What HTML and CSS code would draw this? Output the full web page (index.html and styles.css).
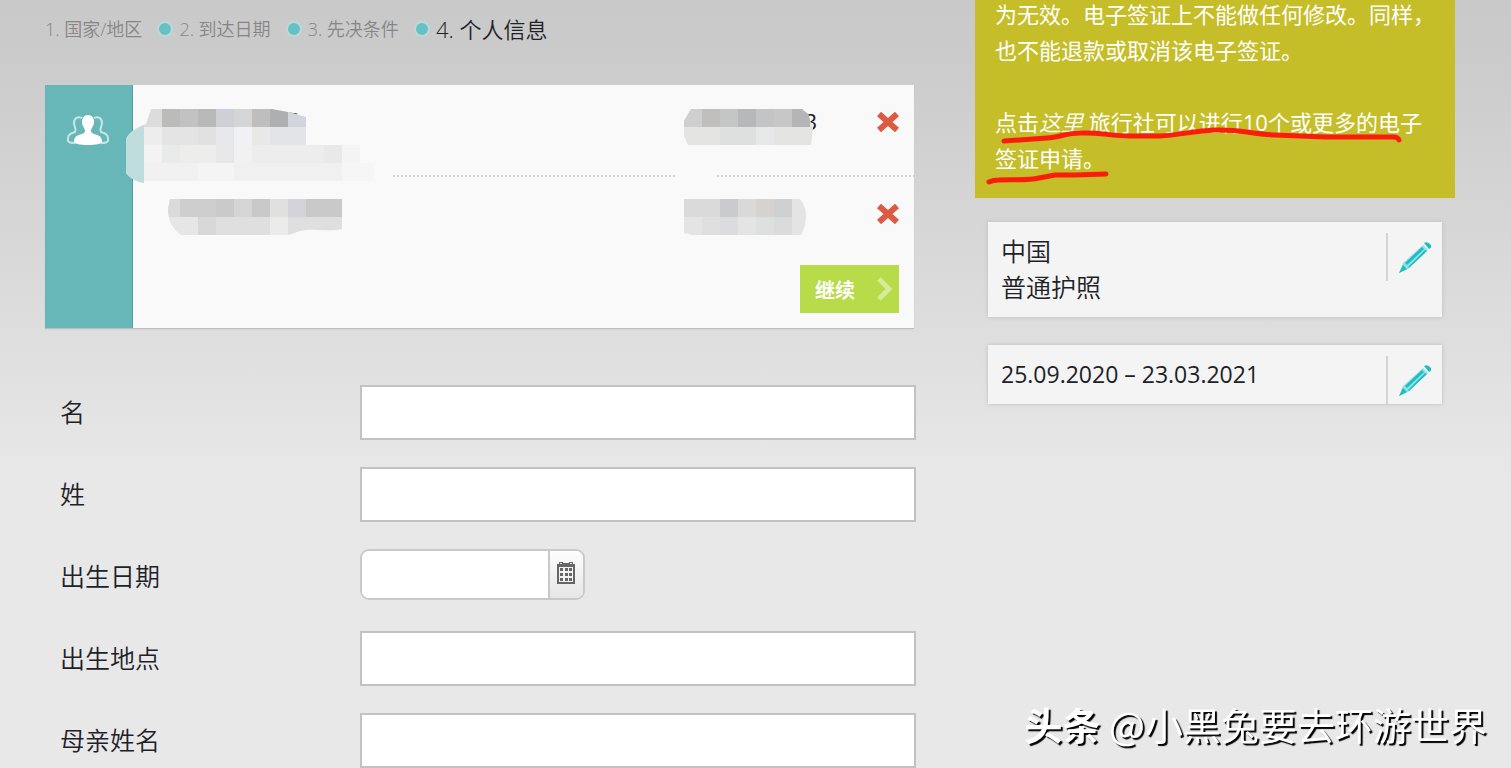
FILE: index.html
```html
<!DOCTYPE html>
<html lang="zh-CN">
<head>
  <meta charset="UTF-8">
  <title>电子签证申请</title>
  <link rel="stylesheet" href="styles.css">
</head>
<body>

  <div class="page">
    <main class="main">

      <!-- steps -->
      <ol class="steps">
        <li>1. 国家/地区</li>
        <li>2. 到达日期</li>
        <li>3. 先决条件</li>
        <li class="active">4. 个人信息</li>
      </ol>

      <!-- applicants -->
      <section class="people">
        <div class="people-side">
          <svg width="42" height="32" viewBox="0 0 42 32">
            <g fill="none" stroke="#c4e6e6" stroke-width="2">
              <path d="M15 4C11 2 7 4 7 9C7 13 10 15 8 18C4 19 1 21 1 24V27C2 29 5 29 8 29"/>
              <path d="M27 4C31 2 35 4 35 9C35 13 32 15 34 18C38 19 41 21 41 24V27C40 29 37 29 34 29"/>
            </g>
            <path fill="#fff" d="M21 1C17 1 15 4 15 8C15 12 18 14 18 17C18 19 15 20 12 21C8 22 7 25 7 28C7 30 14 31 21 31S35 30 35 28C35 25 34 22 30 21C27 20 24 19 24 17C24 14 27 12 27 8C27 4 25 1 21 1Z"/>
          </svg>
        </div>
        <div class="people-body">
          <ul>
            <li class="person">
              <div class="cell">
                <svg class="mosaic mosaic-name" width="270" height="92" viewBox="126 108 270 92">
                  <defs>
                    <clipPath id="blur1"><path d="M151 109H272L288 112L306 117V145H360V160L375 163L393 176V199H162V183H144C136 182 130 178 126 173V139C130 131 138 127 146 124Z"/></clipPath>
                  </defs>
                  <path d="M289 114L297 115" stroke="#1d2433" stroke-width="3"/>
                  <g clip-path="url(#blur1)">
                    <rect x="126" y="109" width="270" height="90" fill="#f9f9f9"/>
                    <path fill="#dcdcdc" d="M144 109h18v18h-18z"/>
                    <path fill="#bbbbb9" d="M162 109h18v18h-18z"/>
                    <path fill="#c2c2c2" d="M180 109h18v18h-18z"/>
                    <path fill="#b9b9b9" d="M198 109h18v18h-18z"/>
                    <path fill="#cdd0d7" d="M216 109h18v18h-18z"/>
                    <path fill="#d5d5d6" d="M234 109h18v18h-18z"/>
                    <path fill="#bfbebc" d="M252 109h18v18h-18z"/>
                    <path fill="#adafb1" d="M270 109h18v18h-18z"/>
                    <path fill="#d2d5db" d="M288 109h18v18h-18z"/>
                    <path fill="#bfdddd" d="M126 109h18v74h-18z"/>
                    <path fill="#ededed" d="M144 127h18v18h-18z"/>
                    <path fill="#e4e4e4" d="M162 127h36v18h-36z"/>
                    <path fill="#e1e1e0" d="M198 127h18v18h-18z"/>
                    <path fill="#e6e7ec" d="M216 127h18v18h-18z"/>
                    <path fill="#f0f1f4" d="M234 127h18v18h-18z"/>
                    <path fill="#e8e8e8" d="M252 127h18v18h-18z"/>
                    <path fill="#e2e4e8" d="M270 127h36v18h-36z"/>
                    <path fill="#f3f3f3" d="M144 145h18v18h-18z"/>
                    <path fill="#e9eaea" d="M162 145h18v18h-18z"/>
                    <path fill="#ededec" d="M180 145h36v18h-36z"/>
                    <path fill="#e6e7e6" d="M216 145h18v18h-18z"/>
                    <path fill="#f0f1f2" d="M234 145h18v18h-18z"/>
                    <path fill="#ededee" d="M252 145h72v18h-72z"/>
                    <path fill="#e9e9e9" d="M324 145h18v18h-18z"/>
                    <path fill="#f4f4f4" d="M342 145h18v18h-18z"/>
                    <path fill="#f1f1f1" d="M144 163h54v18h-54z"/>
                    <path fill="#f4f4f4" d="M198 163h36v18h-36z"/>
                    <path fill="#f0f0f0" d="M234 163h108v18h-108z"/>
                    <path fill="#f6f6f6" d="M342 163h32v18h-32z"/>
                  </g>
                </svg>
              </div>
              <div class="cell">
                <span class="number">3</span>
                <svg class="mosaic mosaic-number" width="130" height="36" viewBox="684 109 130 36">
                  <defs>
                    <clipPath id="blur2"><path d="M691 109H802L808 114L813 128L811 145H688L684 136V121Z"/></clipPath>
                  </defs>
                  <g clip-path="url(#blur2)">
                    <rect x="684" y="109" width="130" height="36" fill="#e4e4e3"/>
                    <path fill="#cfcfcf" d="M684 109h18v18h-18z"/>
                    <path fill="#c1bfbd" d="M702 109h18v18h-18z"/>
                    <path fill="#c4c5c5" d="M720 109h18v18h-18z"/>
                    <path fill="#b7b8ba" d="M738 109h18v18h-18z"/>
                    <path fill="#c3c4c5" d="M756 109h18v18h-18z"/>
                    <path fill="#c7c7c7" d="M774 109h18v18h-18z"/>
                    <path fill="#b3b5b6" d="M792 109h18v18h-18z"/>
                    <path fill="#dee0e0" d="M720 127h36v18h-36z"/>
                    <path fill="#e5e7e9" d="M756 127h18v18h-18z"/>
                  </g>
                </svg>
                <span class="gap"></span>
              </div>
              <button class="remove" type="button" aria-label="删除">
                <svg width="22" height="22" viewBox="0 0 22 22"><path d="M2 3L20 19M20 3L2 19" stroke="#db5a42" stroke-width="6"/></svg>
              </button>
            </li>
            <li class="person">
              <div class="cell">
                <svg class="mosaic mosaic-name2" width="174" height="36" viewBox="168 199 174 36">
                  <defs>
                    <clipPath id="blur3"><path d="M170 199H342V229C330 232 315 229 305 230C298 231 294 234 287 235H182C174 231 168 221 168 209Z"/></clipPath>
                  </defs>
                  <g clip-path="url(#blur3)">
                    <rect x="168" y="199" width="174" height="36" fill="#dfdfdf"/>
                    <path fill="#dadada" d="M168 199h12v18h-12z"/>
                    <path fill="#cecece" d="M180 199h36v18h-36z"/>
                    <path fill="#cacaca" d="M216 199h18v18h-18z"/>
                    <path fill="#d5d5d6" d="M234 199h18v18h-18z"/>
                    <path fill="#c9c9c9" d="M252 199h18v18h-18z"/>
                    <path fill="#e0e0de" d="M270 199h18v18h-18z"/>
                    <path fill="#d3d4d9" d="M288 199h18v18h-18z"/>
                    <path fill="#c8c9c9" d="M306 199h36v18h-36z"/>
                    <path fill="#e6e6e6" d="M168 217h30v18h-30z"/>
                    <path fill="#d8d8d8" d="M198 217h18v18h-18z"/>
                    <path fill="#ebebea" d="M270 217h18v18h-18z"/>
                  </g>
                </svg>
              </div>
              <div class="cell">
                <svg class="mosaic mosaic-number" width="122" height="36" viewBox="684 199 122 36">
                  <defs>
                    <clipPath id="blur4"><path d="M684 199H800C804 204 806 210 806 216S804 230 801 235H692L684 233Z"/></clipPath>
                  </defs>
                  <g clip-path="url(#blur4)">
                    <rect x="684" y="199" width="122" height="36" fill="#e4e4e4"/>
                    <path fill="#dadada" d="M684 199h36v18h-36z"/>
                    <path fill="#cacbcc" d="M720 199h18v18h-18z"/>
                    <path fill="#d9d9d9" d="M738 199h18v18h-18z"/>
                    <path fill="#d5d3cf" d="M756 199h18v18h-18z"/>
                    <path fill="#cfd0d1" d="M774 199h18v18h-18z"/>
                    <path fill="#dfdfdf" d="M702 217h18v18h-18z"/>
                    <path fill="#dbdcdd" d="M720 217h18v18h-18z"/>
                    <path fill="#dedfdf" d="M756 217h18v18h-18z"/>
                    <path fill="#dadcdc" d="M774 217h18v18h-18z"/>
                  </g>
                </svg>
              </div>
              <button class="remove" type="button" aria-label="删除">
                <svg width="22" height="22" viewBox="0 0 22 22"><path d="M2 3L20 19M20 3L2 19" stroke="#db5a42" stroke-width="6"/></svg>
              </button>
            </li>
          </ul>
          <button class="continue" type="button">
            继续
            <svg width="16" height="24" viewBox="0 0 16 24"><path d="M2 2L12 12L2 22" fill="none" stroke="#d6eb98" stroke-width="5"/></svg>
          </button>
        </div>
      </section>

      <!-- form -->
      <form class="form">
        <div class="row">
          <label for="first-name">名</label>
          <input id="first-name" type="text">
        </div>
        <div class="row">
          <label for="last-name">姓</label>
          <input id="last-name" type="text">
        </div>
        <div class="row">
          <label for="birth-date">出生日期</label>
          <div class="date">
            <input id="birth-date" type="text">
            <button type="button" aria-label="选择日期">
              <svg width="20" height="22" viewBox="0 0 20 22">
                <path fill="#666" d="M1 2H3V0H7V1H13V0H17V2H19V22H1Z"/>
                <path fill="#f2f2f2" d="M3 5H17V20H3ZM4 1H6V2H4ZM14 1H16V2H14Z"/>
                <path fill="#666" d="M4 6h3v3H4zM9 6h3v3H9zM13 6h3v3h-3zM4 11h3v3H4zM9 11h3v3H9zM13 11h3v3h-3zM4 16h3v3H4zM9 16h3v3H9zM13 16h3v3h-3z"/>
              </svg>
            </button>
          </div>
        </div>
        <div class="row">
          <label for="birth-place">出生地点</label>
          <input id="birth-place" type="text">
        </div>
        <div class="row">
          <label for="mother-name">母亲姓名</label>
          <input id="mother-name" type="text">
        </div>
      </form>
    </main>

    <aside class="side">
      <div class="notice">
        <p>为无效。电子签证上不能做任何修改。同样，<br>也不能退款或取消该电子签证。</p>
        <p>点击<a href="#"><em>这里</em></a> 旅行社可以进行10个或更多的电子<br>签证申请。</p>
        <svg class="marker" width="480" height="202" viewBox="0 -1 480 202">
          <g fill="none" stroke="#fb1d0c" stroke-width="5" stroke-linecap="round" stroke-linejoin="round">
            <path d="M29 144L72 141C85 140 92 136 105 136C125 135 135 139 155 139H185C205 138 218 134 240 133C265 132 275 137 300 138L350 140H418Q423 140 424 143"/>
            <path d="M14 185Q18 183 24 183C38 182 52 184 64 181L80 178H100L131 177"/>
          </g>
        </svg>
      </div>

      <div class="info">
        <p>中国<br>普通护照</p>
        <button class="edit" type="button" aria-label="编辑">
          <svg width="32" height="32" viewBox="0 0 32 32">
            <path fill="#8fe3e6" d="M0 32L4 22L24 4L29 9L9 28Z"/>
            <path fill="#22bcc0" d="M0 32L4 24L8 28ZM25 2Q28 0 31 3T30 8ZM6 22L23 6L25 8L8 24ZM9 26L26 9L28 10L10 27Z"/>
          </svg>
        </button>
      </div>

      <div class="info">
        <p class="dates">25.09.2020 – 23.03.2021</p>
        <button class="edit" type="button" aria-label="编辑">
          <svg width="32" height="32" viewBox="0 0 32 32">
            <path fill="#8fe3e6" d="M0 32L4 22L24 4L29 9L9 28Z"/>
            <path fill="#22bcc0" d="M0 32L4 24L8 28ZM25 2Q28 0 31 3T30 8ZM6 22L23 6L25 8L8 24ZM9 26L26 9L28 10L10 27Z"/>
          </svg>
        </button>
      </div>
    </aside>
  </div>

  <div class="watermark"><b>头条</b> @小黑兔要去环游世界</div>

</body>
</html>
```
FILE: styles.css
```css
* { margin: 0; padding: 0; box-sizing: border-box; }

body {
  min-height: 100vh;
  overflow: hidden;
  font-family: "Open Sans", "Noto Sans CJK SC", sans-serif;
  font-weight: 350;
  color: #1d2228;
  background: #e8e8e8 linear-gradient(#c9c9c9 0, #cbcbcb 60px, #e8e8e8 480px) no-repeat;
}

button {
  border: none;
  background: none;
  font-family: inherit;
  cursor: pointer;
}

svg { display: block; }

.page {
  display: flex;
  align-items: flex-start;
  gap: 59px;
  padding: 0 56px 0 45px;
}

.main { flex: 1; height: 768px; min-width: 0; }
.side { width: 480px; }

/* steps */
.steps {
  display: flex;
  align-items: center;
  height: 57px;
  list-style: none;
  font-size: 18px;
  line-height: 28px;
  color: #868686;
}

.steps li { display: flex; align-items: center; }

.steps li + li::before {
  content: "";
  width: 12px;
  height: 12px;
  margin: 0 6px 0 15px;
  border: 2px solid #bcd8d9;
  border-radius: 50%;
  background-color: #66c1c5;
}

.steps .active { font-size: 22px; color: #1d2228; }

/* applicants */
.people {
  display: flex;
  height: 243px;
  margin: 28px 2px 57px 0;
  background-color: #f9f9f9;
  box-shadow: 0 1px 1px #bdbdbd;
}

.people-side {
  width: 88px;
  padding: 29px 22px;
  background-color: #67b6b8;
  border-right: 1px solid #529da0;
}

.people-body { flex: 1; }
.people ul { list-style: none; }

.person {
  display: grid;
  grid-template-columns: 1fr 193px 22px;
  height: 92px;
  padding-right: 15px;
}

.person:first-child {
  background: repeating-linear-gradient(90deg, #d2d2d2 0, #d2d2d2 2px, transparent 2px, transparent 4px) bottom / 100% 2px no-repeat;
}

.cell { position: relative; }

.number {
  position: absolute;
  top: 20px;
  right: 60px;
  font-size: 22px;
  line-height: 32px;
  font-weight: 400;
}

.mosaic { position: absolute; }
.mosaic-name { top: 23px; left: -7px; }
.mosaic-name2 { top: 22px; left: 35px; }
.mosaic-number { top: 24px; left: 0; }
.person + .person .mosaic-number { top: 22px; }

.gap {
  position: absolute;
  bottom: 0;
  left: -9px;
  width: 41px;
  height: 2px;
  background-color: #f9f9f9;
}

.remove { height: 22px; margin-top: 26px; }

.continue {
  display: flex;
  align-items: center;
  justify-content: space-between;
  width: 99px;
  height: 48px;
  margin: -4px 15px 0 auto;
  padding: 0 6px 0 15px;
  background-color: #b7db49;
  font-size: 20px;
  font-weight: 700;
  color: #fff;
}

/* form */
.form {
  display: grid;
  gap: 27px;
  padding-left: 15px;
}

.row {
  display: grid;
  grid-template-columns: 300px 1fr;
  height: 55px;
}

.row label { font-size: 25px; line-height: 54px; }

.row input {
  width: 100%;
  padding: 0 12px;
  border: 2px solid #c2c2c2;
  background-color: #fff;
  font-size: 22px;
}

.date {
  display: flex;
  width: 225px;
  height: 51px;
  overflow: hidden;
  border: 2px solid #c9c9c9;
  border-radius: 9px;
  background-color: #fff;
}

.date input { flex: 1; min-width: 0; border: none; }

.date button {
  width: 35px;
  padding: 0 0 3px 6px;
  border-left: 2px solid #c9c9c9;
  background: linear-gradient(#fdfdfd, #e6e6e6);
}

/* sidebar */
.notice {
  position: relative;
  height: 202px;
  margin-top: -4px;
  padding-left: 20px;
  background-color: #c5be29;
  font-size: 22px;
  font-weight: 400;
  line-height: 36px;
  white-space: nowrap;
  color: #fff;
}

.notice p { margin-bottom: 36px; }
.notice a { color: #fff; text-decoration: none; font-weight: 350; }

.marker { position: absolute; top: 0; left: 0; }

.info {
  display: flex;
  justify-content: space-between;
  align-items: flex-start;
  margin: 24px 13px 28px;
  padding: 11px 0 0 13px;
  background-color: #f4f4f4;
  box-shadow: 0 0 4px #bbb;
}

.info p {
  padding-bottom: 12px;
  font-size: 25px;
  line-height: 36px;
}

.info .dates { font-size: 23px; font-weight: 400; }

.edit {
  width: 56px;
  height: 48px;
  padding-left: 11px;
  border-left: 2px solid #d4d4d4;
}

.watermark {
  position: fixed;
  right: 24px;
  bottom: 16px;
  font-family: "Noto Sans CJK SC", sans-serif;
  font-size: 38px;
  line-height: 56px;
  font-weight: 400;
  color: #fff;
  text-shadow: 2px 2px 1px #000;
}
```
